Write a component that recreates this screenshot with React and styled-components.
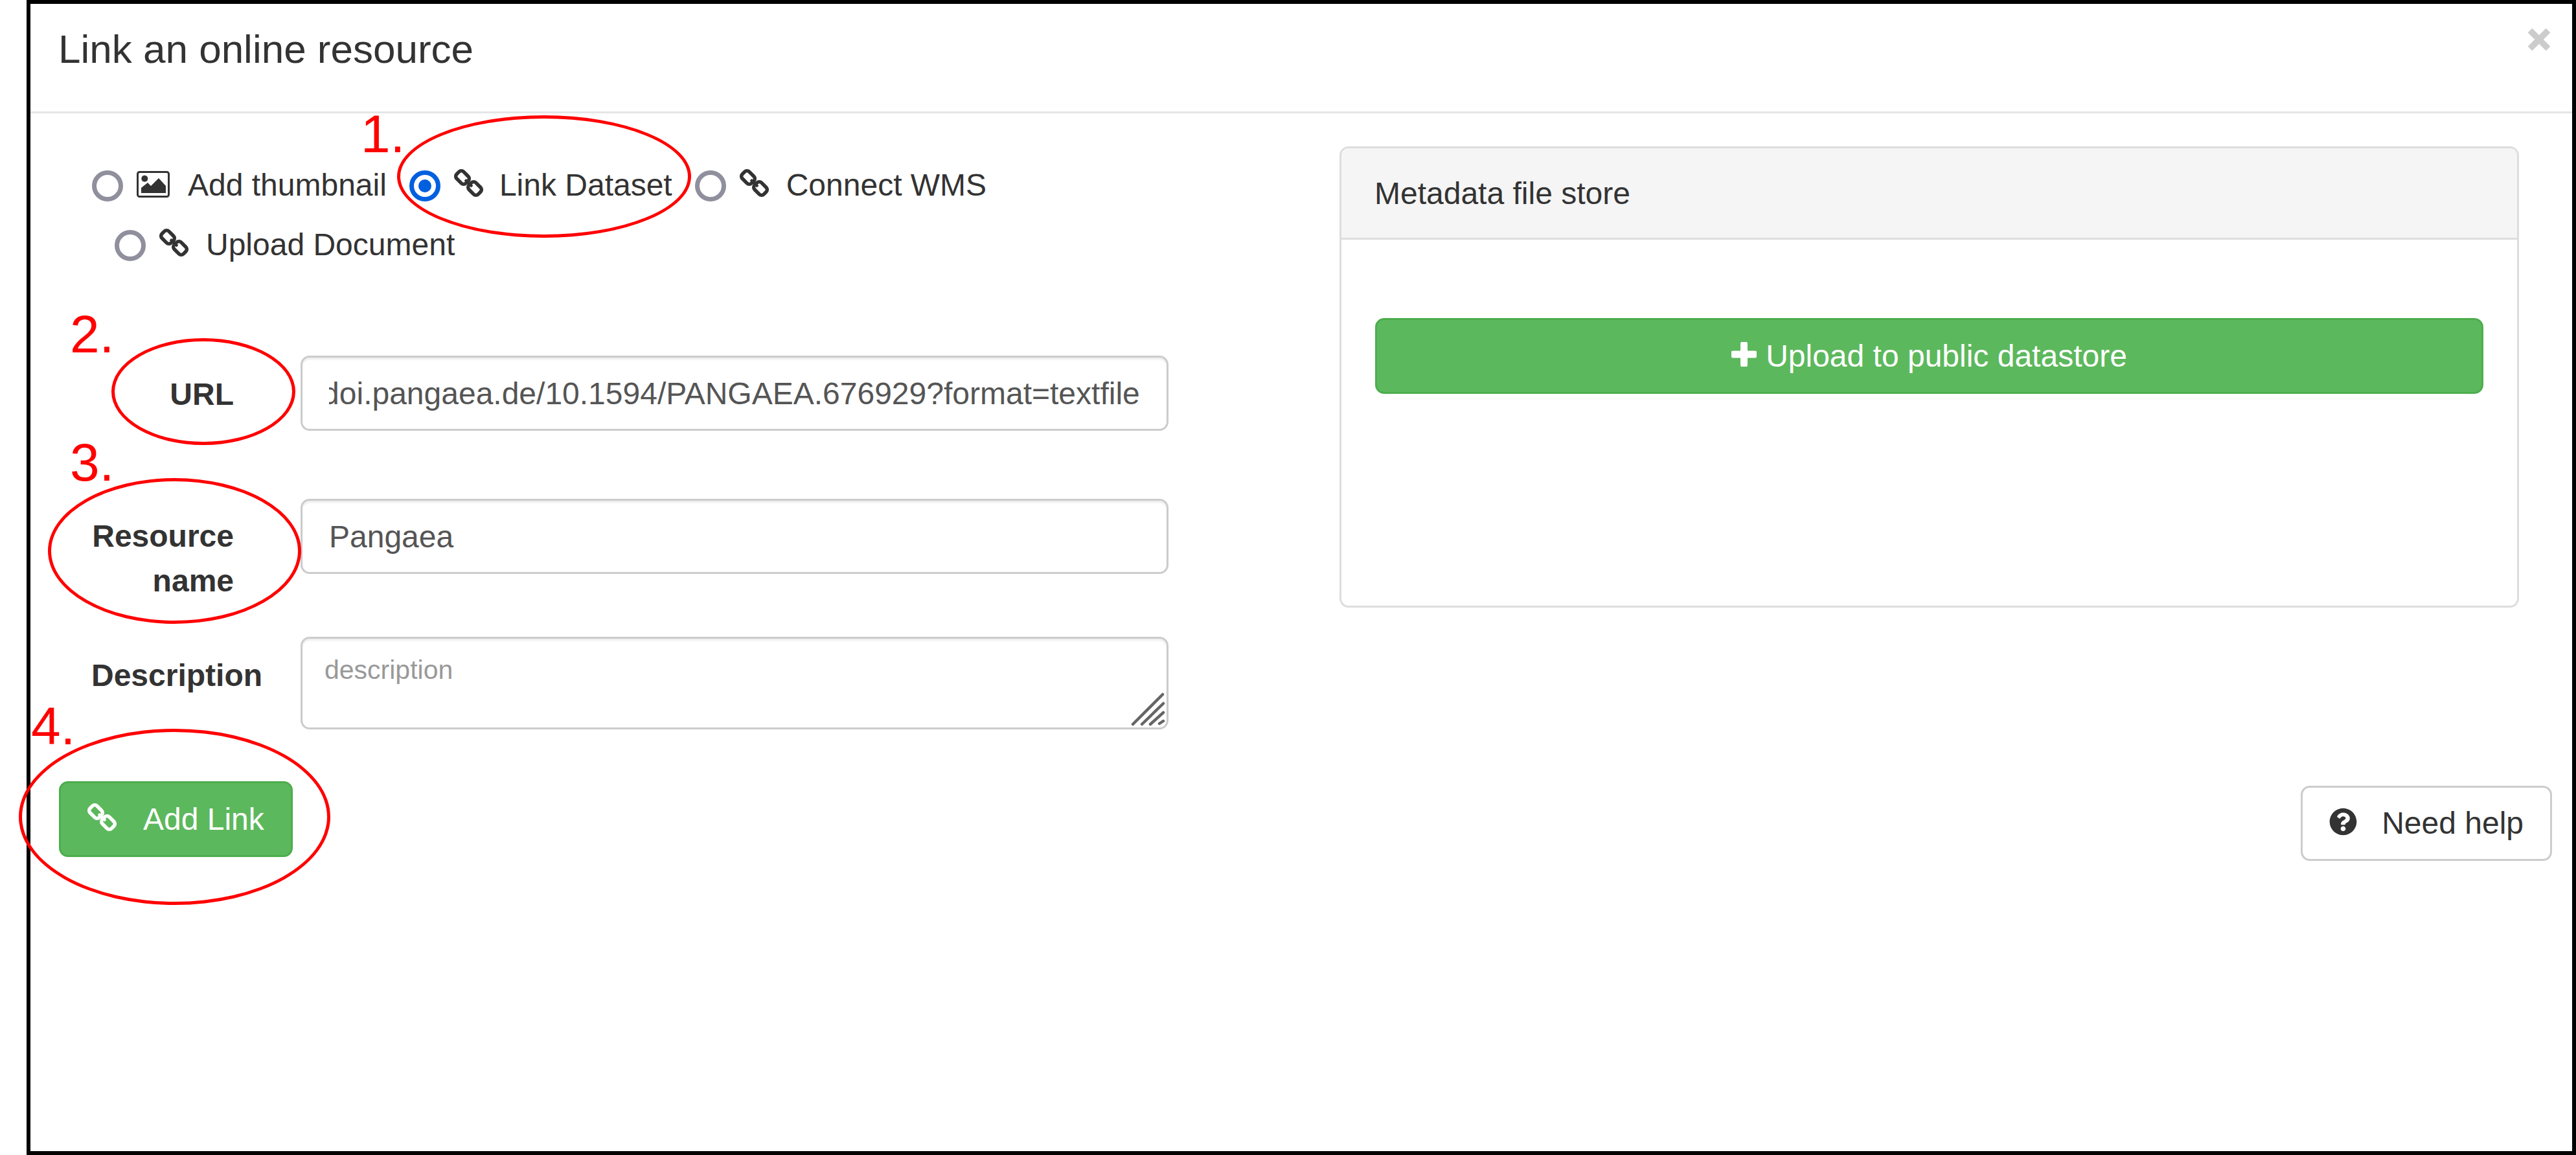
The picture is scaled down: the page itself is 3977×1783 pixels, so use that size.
import React, { useLayoutEffect, useRef } from "react";
import styled, { createGlobalStyle } from "styled-components";
import { FaQuestionCircle } from "react-icons/fa";

const GlobalStyle = createGlobalStyle`
    html, body {
        margin: 0;
        padding: 0;
        background: #fff;
        overflow: hidden;
    }
    * {
        box-sizing: border-box;
    }
`;

const Page = styled.div`
    position: relative;
    width: 3977px;
    height: 1783px;
    padding-left: 41px;
    font-family: "Liberation Sans", Arial, sans-serif;
    font-size: 48px;
    line-height: 68.6px;
    color: #333;
`;

const Frame = styled.div`
    height: 100%;
    border: 6px solid #000;
    background: #fff;
`;

const Header = styled.header`
    display: flex;
    justify-content: space-between;
    align-items: flex-start;
    height: 169px;
    padding: 36px 34px 0 43px;
    border-bottom: 3px solid #e5e5e5;
`;

const Title = styled.h4`
    margin: 0;
    font-size: 62px;
    font-weight: 400;
    line-height: 68px;
`;

const CloseIcon = styled.svg`
    width: 34px;
    height: 34px;
    margin-top: 2px;
`;

const Body = styled.div`
    display: flex;
`;

const LeftCol = styled.div`
    display: flex;
    flex-direction: column;
    align-items: flex-start;
    width: 2021px;
    padding-top: 77px;
`;

const RightCol = styled.div`
    flex: 1;
    display: flex;
    flex-direction: column;
    align-items: flex-end;
    padding: 51px 31px 0 0;
`;

const RadioRow = styled.div`
    display: flex;
    gap: 35px;
    padding-left: ${(p) => p.$indent}px;
    margin-bottom: ${(p) => p.$bottom}px;
`;

const RadioItem = styled.label`
    display: flex;
    align-items: center;
`;

const RadioMark = styled.span`
    position: relative;
    width: 48px;
    height: 48px;
    margin: 2px 21px 0 0;
    border-radius: 50%;
    border: 7px solid ${(p) => (p.$checked ? "#0060df" : "#8f8f9d")};

    &::after {
        content: "";
        display: ${(p) => (p.$checked ? "block" : "none")};
        position: absolute;
        inset: 7px;
        border-radius: 50%;
        background: #0060df;
    }
`;

const LinkSvg = styled.svg`
    width: 45px;
    height: 45px;
    margin-bottom: 8px;
    flex-shrink: 0;
`;

const ImageSvg = styled.svg`
    width: 51px;
    height: 41px;
    margin-bottom: 4px;
    flex-shrink: 0;
`;

const RadioText = styled.span`
    margin-left: ${(p) => p.$gap}px;
`;

const FieldRow = styled.div`
    display: flex;
    gap: 103px;
    padding-left: 94px;
    margin-bottom: ${(p) => p.$bottom}px;
`;

const FieldLabel = styled.label`
    flex-shrink: 0;
    width: 220px;
    padding-top: ${(p) => p.$top || 24}px;
    font-weight: 700;
    text-align: right;
`;

const TextInput = styled.input`
    width: 1340px;
    height: 116px;
    padding: 2px 41px 0;
    border: 3px solid #ccc;
    border-radius: 14px;
    box-shadow: inset 0 3px 3px rgba(0, 0, 0, 0.075);
    outline: none;
    font: inherit;
    color: #555;
`;

const AreaWrap = styled.div`
    position: relative;
    width: 1340px;
    height: 143px;
`;

const TextArea = styled.textarea`
    display: block;
    width: 100%;
    height: 100%;
    padding: 25px 34px;
    border: 3px solid #ccc;
    border-radius: 14px;
    box-shadow: inset 0 3px 3px rgba(0, 0, 0, 0.075);
    outline: none;
    resize: none;
    font-family: inherit;
    font-size: 41px;

    &::placeholder {
        color: #999;
        opacity: 1;
    }
`;

const Grip = styled.svg`
    position: absolute;
    right: 4px;
    bottom: 3px;
    width: 54px;
    height: 54px;
`;

const Button = styled.button`
    display: flex;
    align-items: center;
    justify-content: center;
    height: 117px;
    padding-top: 2px;
    border: 3px solid ${(p) => (p.$variant === "success" ? "#4cae4c" : "#ccc")};
    border-radius: 14px;
    background: ${(p) => (p.$variant === "success" ? "#5cb85c" : "#fff")};
    color: ${(p) => (p.$variant === "success" ? "#fff" : "#333")};
    font: inherit;
`;

const AddButton = styled(Button)`
    gap: 41px;
    margin: 80px 0 0 44px;
    padding: 2px 41px 0;
`;

const UploadButton = styled(Button)`
    width: 100%;
    gap: 14px;
`;

const HelpButton = styled(Button)`
    gap: 38px;
    height: 116px;
    margin-top: 275px;
    padding: 0 41px;
`;

const PlusSvg = styled.svg`
    width: 39px;
    height: 38px;
    margin-bottom: 7px;
`;

const HelpIcon = styled(FaQuestionCircle)`
    width: 43px;
    height: 43px;
    margin-bottom: 5px;
`;

const Panel = styled.section`
    width: 1821px;
    height: 712px;
    margin-right: 51px;
    border: 3px solid #ddd;
    border-radius: 14px;
    overflow: hidden;
`;

const PanelHeading = styled.div`
    height: 141px;
    padding: 36px 51px 0;
    background: #f5f5f5;
    border-bottom: 3px solid #ddd;
`;

const PanelBody = styled.div`
    padding: 121px 52px 0;
`;

/* red notes drawn on top of the screenshot */
const NoteRing = styled.div`
    position: absolute;
    left: ${(p) => p.$x}px;
    top: ${(p) => p.$y}px;
    width: ${(p) => p.$w}px;
    height: ${(p) => p.$h}px;
    border: 5px solid #f00;
    border-radius: 50%;
    pointer-events: none;
`;

const NoteNumber = styled.div`
    position: absolute;
    left: ${(p) => p.$x}px;
    top: ${(p) => p.$y}px;
    color: #f00;
    font-size: 82px;
    line-height: 84px;
`;

const LinkIcon = ({ color = "#333" }) => (
    <LinkSvg viewBox="0 0 45 45" fill="none" stroke={color}>
        <rect x="3" y="6.5" width="20" height="15" rx="5" strokeWidth="5.5" transform="rotate(45 13 14)" />
        <rect x="22" y="23.5" width="20" height="15" rx="5" strokeWidth="5.5" transform="rotate(45 32 31)" />
        <path d="M17 17.5 L28 28" strokeWidth="4" />
    </LinkSvg>
);

const ImageIcon = () => (
    <ImageSvg viewBox="0 0 51 41">
        <rect x="1.5" y="1.5" width="48" height="38" rx="3" fill="none" stroke="#333" strokeWidth="3" />
        <circle cx="12.3" cy="11.7" r="5" fill="#333" />
        <path d="M7 34 V26 L17 18 L22 23 L34 11 L45 23 V34 Z" fill="#333" />
    </ImageSvg>
);

const Radio = ({ checked, icon, gap, children }) => (
    <RadioItem>
        <RadioMark $checked={checked} />
        {icon}
        <RadioText $gap={gap}>{children}</RadioText>
    </RadioItem>
);

const App = () => {
    const urlRef = useRef(null);

    // a long url sits scrolled to its end, as after typing it
    useLayoutEffect(() => {
        urlRef.current.scrollLeft = urlRef.current.scrollWidth;
    }, []);

    return (
        <Page>
            <GlobalStyle />
            <Frame>
                <Header>
                    <Title>Link an online resource</Title>
                    <CloseIcon viewBox="0 0 34 34">
                        <path d="M3 3 L31 31 M31 3 L3 31" stroke="#ccc" strokeWidth="9.5" />
                    </CloseIcon>
                </Header>
                <Body>
                    <LeftCol>
                        <RadioRow $indent={95} $bottom={23.4}>
                            <Radio icon={<ImageIcon />} gap={28}>Add thumbnail</Radio>
                            <Radio checked icon={<LinkIcon />} gap={25}>Link Dataset</Radio>
                            <Radio icon={<LinkIcon />} gap={27}>Connect WMS</Radio>
                        </RadioRow>
                        <RadioRow $indent={130} $bottom={136.4}>
                            <Radio icon={<LinkIcon />} gap={27}>Upload Document</Radio>
                        </RadioRow>
                        <FieldRow $bottom={105}>
                            <FieldLabel $top={26}>URL</FieldLabel>
                            <TextInput
                                ref={urlRef}
                                defaultValue="http://doi.pangaea.de/10.1594/PANGAEA.676929?format=textfile"
                            />
                        </FieldRow>
                        <FieldRow $bottom={52}>
                            <FieldLabel>Resource name</FieldLabel>
                            <TextInput defaultValue="Pangaea" />
                        </FieldRow>
                        <FieldRow $bottom={0}>
                            <FieldLabel $top={26}>Description</FieldLabel>
                            <AreaWrap>
                                <TextArea placeholder="description" />
                                <Grip viewBox="0 0 54 54" stroke="#666" strokeWidth="4.5" strokeLinecap="round">
                                    <path d="M3 49 L49 3 M17 49 L50 17 M30 49 L50 31 M44 48 L50 44" />
                                </Grip>
                            </AreaWrap>
                        </FieldRow>
                        <AddButton $variant="success">
                            <LinkIcon color="#fff" />
                            Add Link
                        </AddButton>
                    </LeftCol>
                    <RightCol>
                        <Panel>
                            <PanelHeading>Metadata file store</PanelHeading>
                            <PanelBody>
                                <UploadButton $variant="success">
                                    <PlusSvg viewBox="0 0 39 38">
                                        <path d="M19.5 3 V35 M3 19 H36" stroke="#fff" strokeWidth="11" strokeLinecap="round" />
                                    </PlusSvg>
                                    Upload to public datastore
                                </UploadButton>
                            </PanelBody>
                        </Panel>
                        <HelpButton>
                            <HelpIcon />
                            Need help
                        </HelpButton>
                    </RightCol>
                </Body>
            </Frame>

            <NoteRing $x={613} $y={178} $w={454} $h={189} />
            <NoteRing $x={172} $y={522} $w={284} $h={165} />
            <NoteRing $x={74} $y={738} $w={391} $h={225} />
            <NoteRing $x={29} $y={1125} $w={481} $h={272} />
            <NoteNumber $x={557} $y={165}>1.</NoteNumber>
            <NoteNumber $x={108} $y={474}>2.</NoteNumber>
            <NoteNumber $x={108} $y={672}>3.</NoteNumber>
            <NoteNumber $x={48} $y={1079}>4.</NoteNumber>
        </Page>
    );
};

export default App;
